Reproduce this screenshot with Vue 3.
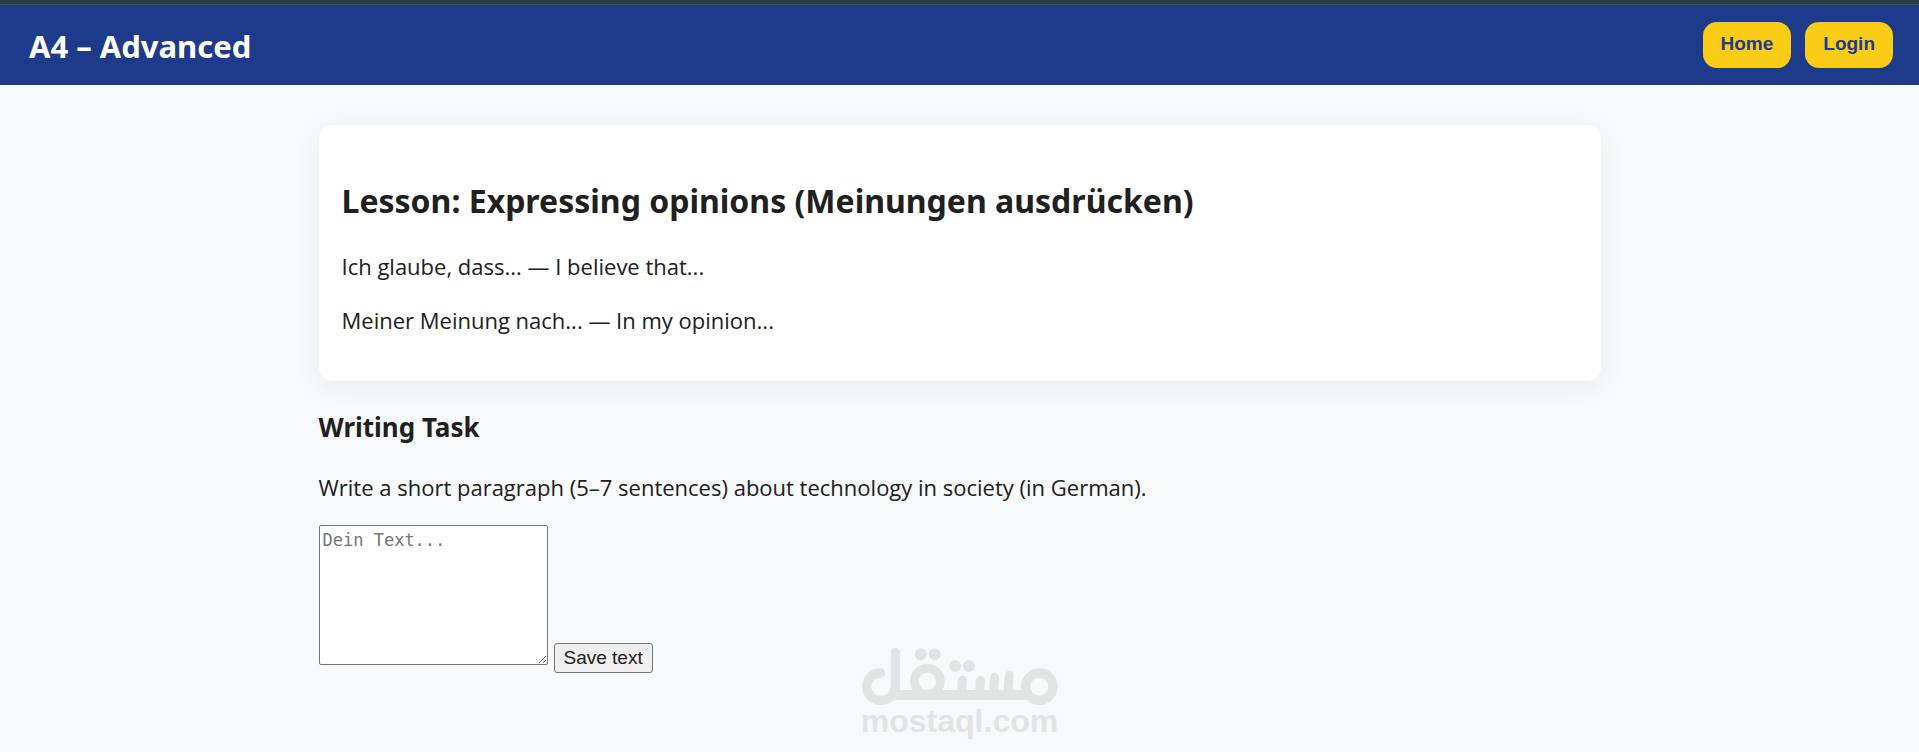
<script setup>
import { ref } from 'vue'

const text = ref('')
const links = ['Home', 'Login']
const phrases = [
  'Ich glaube, dass... — I believe that...',
  'Meiner Meinung nach... — In my opinion...'
]
</script>

<template>
  <div class="page">
    <header class="header">
      <h1>A4 – Advanced</h1>
      <nav>
        <button v-for="link in links" :key="link" type="button" class="nav-button">{{ link }}</button>
      </nav>
    </header>
    <main class="content">
      <section class="card">
        <h2>Lesson: Expressing opinions (Meinungen ausdrücken)</h2>
        <p v-for="phrase in phrases" :key="phrase">{{ phrase }}</p>
      </section>
      <section class="task">
        <h3>Writing Task</h3>
        <p><label for="answer">Write a short paragraph (5–7 sentences) about technology in society (in German).</label></p>
        <div class="editor">
          <textarea id="answer" v-model="text" placeholder="Dein Text..."></textarea>
          <button type="button" class="save">Save text</button>
        </div>
      </section>
    </main>
    <div class="watermark">
      <svg viewBox="0 0 588 172" fill="none" stroke="currentColor" aria-hidden="true">
        <path d="M56 75C34 75 14 92 14 116C14 140 34 157 56 157C82 157 100 140 100 112V14" stroke-width="28" stroke-linecap="round" />
        <path d="M96 141H500" stroke-width="30" />
        <circle cx="196" cy="100" r="39" stroke-width="26" />
        <circle cx="532" cy="116" r="41" stroke-width="28" />
        <path d="M301 97L298 138M355 97L353 138M398 88L394 138M442 82L437 138" stroke-width="27" stroke-linecap="round" />
        <g fill="currentColor" stroke="none">
          <circle cx="176" cy="19" r="18" />
          <circle cx="218" cy="19" r="18" />
          <circle cx="279" cy="54" r="18" />
          <circle cx="321" cy="54" r="18" />
        </g>
      </svg>
      <span>mostaql.com</span>
    </div>
  </div>
</template>

<style>
body {
  margin: 0;
  background: #f8f9fb;
}
</style>

<style scoped>
.page {
  position: relative;
  box-sizing: border-box;
  min-height: 100vh;
  color: #202020;
  font: 22px/30px "Segoe UI", "Open Sans", sans-serif;
}

.header {
  display: flex;
  align-items: center;
  justify-content: space-between;
  box-sizing: border-box;
  min-height: 85px;
  padding: 0 26px 0 29px;
  border-top: 4px solid #2a4044;
  background: #1e3a8a;
  box-shadow: inset 0 1px #48504e;
}

h1,
h2,
h3 {
  font-family: "Segoe UI", "Noto Sans", sans-serif;
}

h1 {
  margin: 2px 0 0;
  color: #fff;
  font-size: 31px;
  line-height: 44px;
}

nav {
  display: flex;
  gap: 14px;
}

.nav-button {
  height: 46px;
  padding: 0 18px 2px;
  border: 0;
  border-radius: 14px;
  background: #facc15;
  color: #1e3a8a;
  font: bold 19px "Liberation Sans", Arial, sans-serif;
}

.content {
  max-width: 1282px;
  margin: 40px auto 0;
}

.card {
  padding: 54px 23px 22px;
  border-radius: 14px;
  background: #fff;
  box-shadow: 0 6px 28px rgba(0, 0, 0, 0.06);
}

h2 {
  margin: 0 0 28px;
  font-size: 32px;
  line-height: 44px;
}

p {
  margin: 0 0 24px;
}

h3 {
  margin: 28px 0 27px;
  font-size: 26px;
  line-height: 36px;
}

.task p {
  margin-bottom: 23px;
}

.editor {
  display: flex;
  align-items: flex-end;
  gap: 6px;
}

textarea {
  box-sizing: border-box;
  width: 229px;
  height: 140px;
  margin: 0 0 8px;
  padding: 3px;
  border: 1px solid #767676;
  border-radius: 2px;
  background: #fff;
  color: #202020;
  font: 17px/22px "DejaVu Sans Mono", monospace;
  resize: both;
}

textarea::placeholder {
  color: #757575;
}

.save {
  height: 30px;
  padding: 0 9px;
  border: 1px solid #767676;
  border-radius: 3px;
  background: #efefef;
  color: #202020;
  font: 19px "Liberation Sans", Arial, sans-serif;
}

.watermark {
  position: absolute;
  bottom: 15px;
  left: 50%;
  display: flex;
  flex-direction: column;
  align-items: center;
  width: 196px;
  transform: translateX(-50%);
  color: #e2e4e3;
  font: bold 32px/32px "Liberation Sans", Arial, sans-serif;
  pointer-events: none;
}

.watermark svg {
  width: 196px;
}
</style>
